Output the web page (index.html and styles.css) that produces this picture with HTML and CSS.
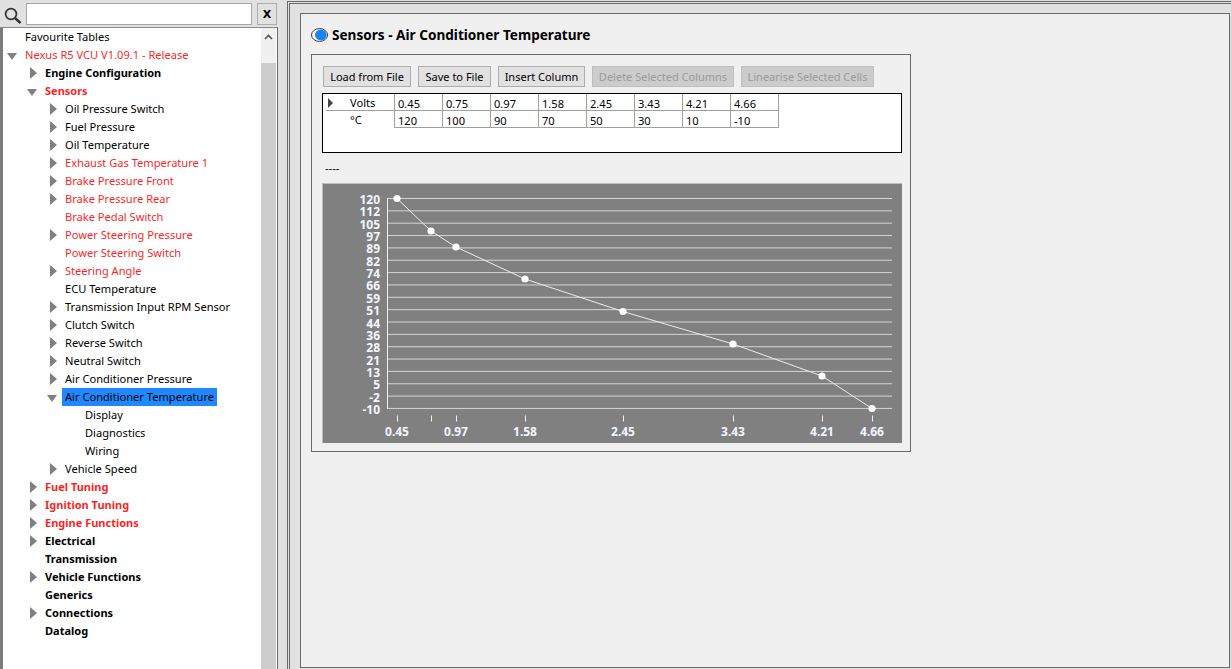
FILE: index.html
```html
<!DOCTYPE html>
<html lang="en">
<head>
<meta charset="utf-8">
<title>Sensors - Air Conditioner Temperature</title>
<link rel="stylesheet" href="styles.css">
</head>
<body>
<div class="app">
  <aside class="sidebar">
    <div class="search">
      <svg class="search-icon" width="18" height="18" viewBox="0 0 18 18"><circle cx="7" cy="7" r="5.4" fill="none" stroke="#333" stroke-width="1.7"/><path d="M11 11l5.5 5" stroke="#333" stroke-width="2.4"/></svg>
      <input class="search-input" type="text" aria-label="Search">
      <button class="clear">X</button>
    </div>
    <div class="tree-wrap">
      <div class="tree">
        <div class="row d0"><span class="tw"></span><span class="label">Favourite Tables</span></div>
        <div class="row d0 red"><span class="tw down"></span><span class="label">Nexus R5 VCU V1.09.1 - Release</span></div>
        <div class="row d1 bold"><span class="tw right"></span><span class="label">Engine Configuration</span></div>
        <div class="row d1 bold red"><span class="tw down"></span><span class="label">Sensors</span></div>
        <div class="row d2"><span class="tw right"></span><span class="label">Oil Pressure Switch</span></div>
        <div class="row d2"><span class="tw right"></span><span class="label">Fuel Pressure</span></div>
        <div class="row d2"><span class="tw right"></span><span class="label">Oil Temperature</span></div>
        <div class="row d2 red"><span class="tw right"></span><span class="label">Exhaust Gas Temperature 1</span></div>
        <div class="row d2 red"><span class="tw right"></span><span class="label">Brake Pressure Front</span></div>
        <div class="row d2 red"><span class="tw right"></span><span class="label">Brake Pressure Rear</span></div>
        <div class="row d2 red"><span class="tw"></span><span class="label">Brake Pedal Switch</span></div>
        <div class="row d2 red"><span class="tw right"></span><span class="label">Power Steering Pressure</span></div>
        <div class="row d2 red"><span class="tw"></span><span class="label">Power Steering Switch</span></div>
        <div class="row d2 red"><span class="tw right"></span><span class="label">Steering Angle</span></div>
        <div class="row d2"><span class="tw"></span><span class="label">ECU Temperature</span></div>
        <div class="row d2"><span class="tw right"></span><span class="label">Transmission Input RPM Sensor</span></div>
        <div class="row d2"><span class="tw right"></span><span class="label">Clutch Switch</span></div>
        <div class="row d2"><span class="tw right"></span><span class="label">Reverse Switch</span></div>
        <div class="row d2"><span class="tw right"></span><span class="label">Neutral Switch</span></div>
        <div class="row d2"><span class="tw right"></span><span class="label">Air Conditioner Pressure</span></div>
        <div class="row d2 selected"><span class="tw down"></span><span class="label">Air Conditioner Temperature</span></div>
        <div class="row d3"><span class="tw"></span><span class="label">Display</span></div>
        <div class="row d3"><span class="tw"></span><span class="label">Diagnostics</span></div>
        <div class="row d3"><span class="tw"></span><span class="label">Wiring</span></div>
        <div class="row d2"><span class="tw right"></span><span class="label">Vehicle Speed</span></div>
        <div class="row d1 bold red"><span class="tw right"></span><span class="label">Fuel Tuning</span></div>
        <div class="row d1 bold red"><span class="tw right"></span><span class="label">Ignition Tuning</span></div>
        <div class="row d1 bold red"><span class="tw right"></span><span class="label">Engine Functions</span></div>
        <div class="row d1 bold"><span class="tw right"></span><span class="label">Electrical</span></div>
        <div class="row d1 bold"><span class="tw"></span><span class="label">Transmission</span></div>
        <div class="row d1 bold"><span class="tw right"></span><span class="label">Vehicle Functions</span></div>
        <div class="row d1 bold"><span class="tw"></span><span class="label">Generics</span></div>
        <div class="row d1 bold"><span class="tw right"></span><span class="label">Connections</span></div>
        <div class="row d1 bold"><span class="tw"></span><span class="label">Datalog</span></div>
      </div>
      <div class="scrollbar">
        <div class="scroll-up"><svg width="9" height="6" viewBox="0 0 9 6"><path d="M1 5l3.5-3.5L8 5" fill="none" stroke="#555" stroke-width="1.6"/></svg></div>
        <div class="scroll-thumb"></div>
      </div>
    </div>
  </aside>
  <main class="main">
    <div class="panel">
      <h1 class="title">
        <svg class="radio" width="17" height="14" viewBox="0 0 17 14"><ellipse cx="8.5" cy="7" rx="8" ry="6.4" fill="#fff" stroke="#333"/><ellipse cx="9.8" cy="7" rx="5.8" ry="5.4" fill="#1a84f5"/></svg>
        Sensors - Air Conditioner Temperature
      </h1>
      <section class="box">
        <div class="toolbar">
          <button class="btn">Load from File</button>
          <button class="btn">Save to File</button>
          <button class="btn">Insert Column</button>
          <button class="btn off">Delete Selected Columns</button>
          <button class="btn off">Linearise Selected Cells</button>
        </div>
        <div class="sheet">
          <div class="sheet-grid">
            <div class="head first"><span class="marker"></span>Volts</div>
            <div class="cell">0.45</div><div class="cell">0.75</div><div class="cell">0.97</div><div class="cell">1.58</div><div class="cell">2.45</div><div class="cell">3.43</div><div class="cell">4.21</div><div class="cell">4.66</div>
            <div class="head"><span class="marker none"></span>°C</div>
            <div class="cell">120</div><div class="cell">100</div><div class="cell">90</div><div class="cell">70</div><div class="cell">50</div><div class="cell">30</div><div class="cell">10</div><div class="cell">-10</div>
          </div>
        </div>
        <div class="status">----</div>
        <svg class="chart" width="580" height="260" viewBox="0 0 580 260">
          <rect width="580" height="260" fill="#808080"/>
          <path d="M.5 260V.5H580" fill="none" stroke="#bdbdbd"/>
          <g class="grid">
            <path d="M66 15.5H570M66 27.85H570M66 40.2H570M66 52.55H570M66 64.9H570M66 77.25H570M66 89.6H570M66 101.95H570M66 114.3H570M66 126.65H570M66 139H570M66 151.35H570M66 163.7H570M66 176.05H570M66 188.4H570M66 200.75H570M66 213.1H570M66 225.45H570"/>
          </g>
          <path class="axis" d="M65.5 15V226"/>
          <path class="axis" d="M75.5 232.5v6M109.5 232.5v6M134.5 232.5v6M203.5 232.5v6M301.5 232.5v6M411.5 232.5v6M500.5 232.5v6M550.5 232.5v6"/>
          <polyline class="curve" points="75,15.5 109,48 134,64 203,96 301,128.5 411,161 500,193 550,225.5"/>
          <g class="dots">
            <circle cx="75" cy="15.5" r="3.6"/><circle cx="109" cy="48" r="3.6"/><circle cx="134" cy="64" r="3.6"/><circle cx="203" cy="96" r="3.6"/><circle cx="301" cy="128.5" r="3.6"/><circle cx="411" cy="161" r="3.6"/><circle cx="500" cy="193" r="3.6"/><circle cx="550" cy="225.5" r="3.6"/>
          </g>
          <g class="ylabels">
            <text x="58" y="21">120</text><text x="58" y="33">112</text><text x="58" y="46">105</text><text x="58" y="58">97</text><text x="58" y="70">89</text><text x="58" y="83">82</text><text x="58" y="95">74</text><text x="58" y="107">66</text><text x="58" y="120">59</text><text x="58" y="132">51</text><text x="58" y="145">44</text><text x="58" y="157">36</text><text x="58" y="169">28</text><text x="58" y="182">21</text><text x="58" y="194">13</text><text x="58" y="206">5</text><text x="58" y="219">-2</text><text x="58" y="231">-10</text>
          </g>
          <g class="xlabels">
            <text x="75" y="253">0.45</text><text x="134" y="253">0.97</text><text x="203" y="253">1.58</text><text x="301" y="253">2.45</text><text x="411" y="253">3.43</text><text x="500" y="253">4.21</text><text x="550" y="253">4.66</text>
          </g>
        </svg>
      </section>
    </div>
  </main>
</div>
</body>
</html>
```
FILE: styles.css
```css
* { box-sizing: border-box; }

html, body {
  margin: 0;
  height: 100%;
  overflow: hidden;
}

body {
  background: #e1e1e1;
  font-family: "Noto Sans", "Open Sans", sans-serif;
  font-size: 11.1px;
  color: #000;
}

.app {
  display: flex;
  height: 669px;
  width: 1231px;
}

/* sidebar */
.sidebar {
  width: 278px;
  display: flex;
  flex-direction: column;
}

.search {
  height: 27px;
  display: flex;
  align-items: flex-start;
  padding: 3px 1px 0 4px;
}

.search-icon { margin: 4px 4px 0 0; flex: none; }

.search-input {
  width: 226px;
  height: 22px;
  border: 1px solid #a6a6a6;
  background: #fff;
  padding: 0;
  flex: none;
}

.clear {
  width: 20px;
  height: 22px;
  margin-left: 5px;
  padding: 0;
  flex: none;
  border: 1px solid #adadad;
  background: #e1e1e1;
  font: bold 11px "DejaVu Sans", sans-serif;
  color: #000;
}

.tree-wrap {
  flex: 1;
  min-height: 0;
  display: flex;
  background: #fff;
  border-top: 1px solid #8a8a8a;
  border-left: 3px solid #7c7c7c;
  border-right: 1px solid #696969;
}

.tree { flex: 1; min-width: 0; }

.row {
  height: 18px;
  display: flex;
  align-items: center;
  line-height: 18px;
  white-space: nowrap;
}

.d0 { padding-left: 2px; }
.d1 { padding-left: 22px; }
.d2 { padding-left: 42px; }
.d3 { padding-left: 62px; }

.tw {
  width: 17px;
  height: 18px;
  flex: none;
  position: relative;
}

.tw.right::before,
.tw.down::before {
  content: "";
  position: absolute;
  width: 0;
  height: 0;
}

.tw.right::before {
  left: 5px;
  top: 3px;
  border-left: 7px solid #808080;
  border-top: 6px solid transparent;
  border-bottom: 6px solid transparent;
}

.tw.down::before {
  left: 2px;
  top: 7px;
  border-top: 7px solid #808080;
  border-left: 5px solid transparent;
  border-right: 5px solid transparent;
}

.label { padding: 0 3px; }

.bold { font-weight: 700; font-size: 11px; }
.red { color: #ff1f1f; }
.selected .label { background: #1e88ff; }

.scrollbar {
  width: 15px;
  flex: none;
  margin-right: 1px;
  display: flex;
  flex-direction: column;
  background: #f0f0f0;
}

.scroll-up {
  height: 35px;
  display: flex;
  justify-content: center;
  padding-top: 6px;
}

.scroll-up svg { display: block; }

.scroll-thumb {
  flex: 1;
  background: #cdcdcd;
}

/* main */
.main {
  flex: 1;
  min-width: 0;
  margin: 1px 0 0 9px;
  padding: 9px 1px 1px 10px;
  border-top: 3px double #696969;
  border-left: 3px double #696969;
}

.panel {
  height: 100%;
  background: #f0f0f0;
  border: 1px solid #696969;
  padding: 14px 10px 0;
}

.title {
  margin: 0 0 12px;
  height: 14px;
  display: flex;
  align-items: center;
  gap: 4px;
  font-size: 13.6px;
  font-weight: 700;
  line-height: 14px;
  white-space: nowrap;
}

.radio { flex: none; }

.box {
  width: 600px;
  height: 398px;
  border: 1px solid #696969;
  padding: 11px 8px 0 10px;
}

.toolbar {
  display: flex;
  gap: 7px;
  padding-left: 1px;
}

.btn {
  height: 21px;
  padding: 0;
  border: 1px solid #adadad;
  background: #e1e1e1;
  font: 11px "Noto Sans", "Open Sans", sans-serif;
  color: #000;
  white-space: nowrap;
}

.btn.off {
  background: #cccccc;
  border-color: #bfbfbf;
  color: #9a9a9a;
}

.toolbar .btn:nth-child(1) { width: 88px; }
.toolbar .btn:nth-child(2) { width: 73px; }
.toolbar .btn:nth-child(3) { width: 87px; }
.toolbar .btn:nth-child(4) { width: 142px; }
.toolbar .btn:nth-child(5) { width: 133px; }

.sheet {
  width: 580px;
  height: 60px;
  margin-top: 6px;
  background: #fff;
  border: 1px solid #000;
}

.sheet-grid {
  display: grid;
  grid-template-columns: 72px repeat(8, 48px);
  grid-auto-rows: 17px;
  width: 456px;
}

.cell {
  padding-left: 3px;
  line-height: 19px;
  border-right: 1px solid #a0a0a0;
  border-bottom: 1px solid #a0a0a0;
}

.head {
  display: flex;
  align-items: center;
  line-height: 19px;
  padding-left: 5px;
  border-right: 1px solid #a0a0a0;
  position: relative;
}

.head.first::after {
  content: "";
  position: absolute;
  left: 3px;
  right: 0;
  bottom: 0;
  height: 1px;
  background: #a0a0a0;
}

.marker {
  width: 0;
  height: 0;
  margin-right: 17px;
  border-left: 5px solid #444;
  border-top: 5px solid transparent;
  border-bottom: 5px solid transparent;
}

.marker.none { border-left-color: transparent; }

.status {
  height: 30px;
  padding-left: 3px;
  line-height: 30px;
}

.chart { display: block; }

.grid path {
  fill: none;
  stroke: #d4d4d4;
  stroke-width: 1;
}

.axis {
  fill: none;
  stroke: #f2f2f2;
  stroke-width: 1;
}

.curve {
  fill: none;
  stroke: #ececec;
  stroke-width: 1;
}

.dots circle { fill: #fff; }

.ylabels text,
.xlabels text {
  fill: #f4f6ff;
  font-family: "Noto Sans", sans-serif;
  font-size: 12px;
  font-weight: 700;
}

.ylabels text { text-anchor: end; }
.xlabels text { text-anchor: middle; }
```
